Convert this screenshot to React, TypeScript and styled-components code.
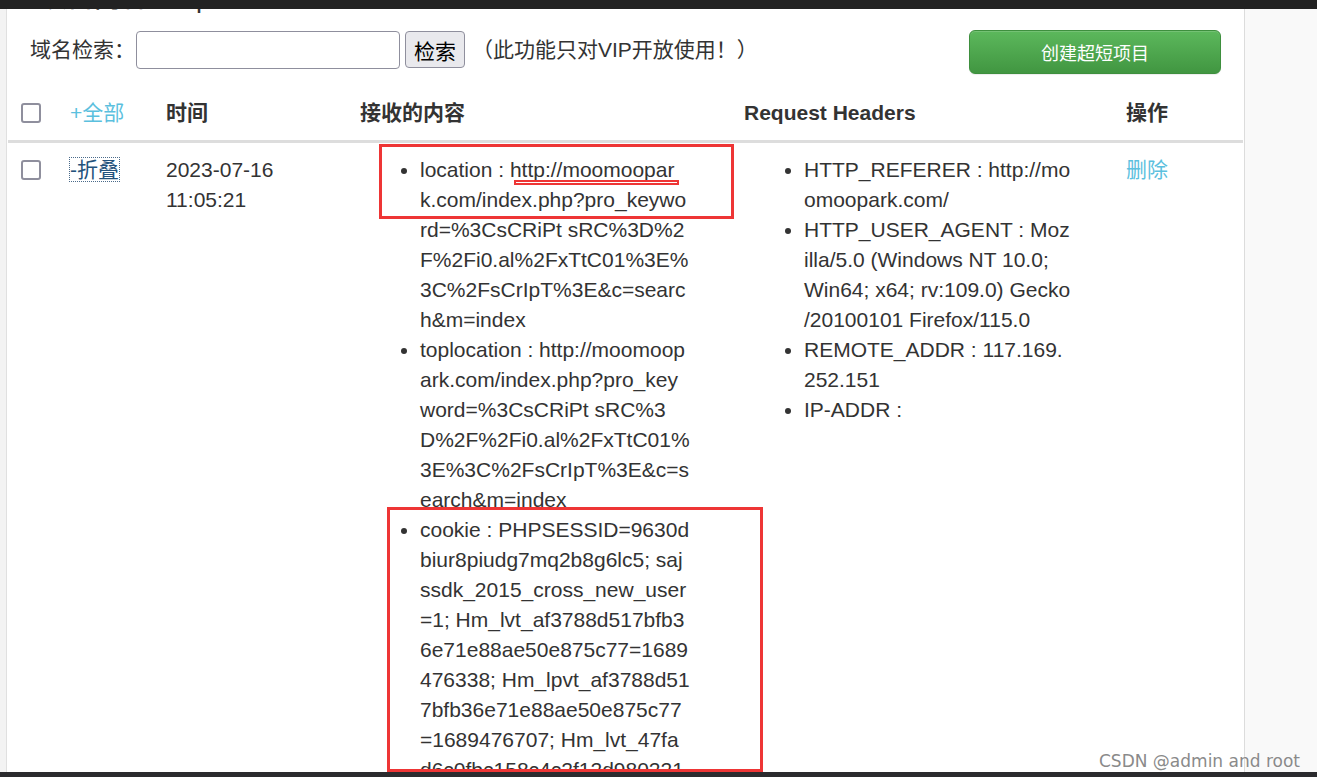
import React from 'react';
import styled, { createGlobalStyle } from 'styled-components';

/* ------------------------------- Data ------------------------------- */
type Item = { key: string; lines: string[] };

const contentItems: Item[] = [
  {
    key: 'location',
    lines: [
      'location : http://moomoopar',
      'k.com/index.php?pro_keywo',
      'rd=%3CsCRiPt sRC%3D%2',
      'F%2Fi0.al%2FxTtC01%3E%',
      '3C%2FsCrIpT%3E&c=searc',
      'h&m=index',
    ],
  },
  {
    key: 'toplocation',
    lines: [
      'toplocation : http://moomoop',
      'ark.com/index.php?pro_key',
      'word=%3CsCRiPt sRC%3',
      'D%2F%2Fi0.al%2FxTtC01%',
      '3E%3C%2FsCrIpT%3E&c=s',
      'earch&m=index',
    ],
  },
  {
    key: 'cookie',
    lines: [
      'cookie : PHPSESSID=9630d',
      'biur8piudg7mq2b8g6lc5; saj',
      'ssdk_2015_cross_new_user',
      '=1; Hm_lvt_af3788d517bfb3',
      '6e71e88ae50e875c77=1689',
      '476338; Hm_lpvt_af3788d51',
      '7bfb36e71e88ae50e875c77',
      '=1689476707; Hm_lvt_47fa',
      'd6c0fbc158c4c2f12d980221',
      '=1689476338; Hm_lpvt_47f',
      'ad6c0fbc158c4c2f12d98022',
      '1=1689476707',
    ],
  },
];

const headerItems: Item[] = [
  { key: 'referer', lines: ['HTTP_REFERER : http://mo', 'omoopark.com/'] },
  {
    key: 'ua',
    lines: [
      'HTTP_USER_AGENT : Moz',
      'illa/5.0 (Windows NT 10.0;',
      'Win64; x64; rv:109.0) Gecko',
      '/20100101 Firefox/115.0',
    ],
  },
  { key: 'addr', lines: ['REMOTE_ADDR : 117.169.', '252.151'] },
  { key: 'ip', lines: ['IP-ADDR :'] },
];

const columns = [50, 96, 194, 384, 382, 129];

/* ------------------------------ Helpers ----------------------------- */
const renderLines = (lines: string[]) =>
  lines.map((line, i) => (
    <React.Fragment key={i}>
      {i > 0 && <br />}
      {line}
    </React.Fragment>
  ));

const App: React.FC = () => {
  return (
    <Screen>
      <GlobalStyle />
      <TopBar />
      <Workspace>
        <LeftGutter />
        <Main>
          <Heading>项目内容 xssp</Heading>

          <SearchBar>
            <SearchLabel>域名检索：</SearchLabel>
            <SearchInput type="text" />
            <SearchButton type="button">检索</SearchButton>
            <Notice>（此功能只对VIP开放使用！）</Notice>
            <CreateButton type="button">创建超短项目</CreateButton>
          </SearchBar>

          <Table>
            <colgroup>
              {columns.map((w, i) => (
                <Col key={i} $w={w} />
              ))}
            </colgroup>
            <thead>
              <tr>
                <Th>
                  <Checkbox type="checkbox" />
                </Th>
                <Th>
                  <ToggleLink $tone="info">+全部</ToggleLink>
                </Th>
                <Th>时间</Th>
                <Th>接收的内容</Th>
                <Th>Request Headers</Th>
                <Th>操作</Th>
              </tr>
            </thead>
            <tbody>
              <tr>
                <Td>
                  <Checkbox type="checkbox" />
                </Td>
                <Td>
                  <ToggleLink $tone="focus">-折叠</ToggleLink>
                </Td>
                <Td>2023-07-16 11:05:21</Td>
                <Td>
                  <DataList>
                    {contentItems.map((item) => (
                      <DataItem key={item.key}>
                        {renderLines(item.lines)}
                        {item.key === 'location' && (
                          <>
                            <Annotation $top={-11} $left={-41} $w={355} $h={75} />
                            <Underline $top={25} $left={94} $w={165} $h={5} />
                          </>
                        )}
                        {item.key === 'cookie' && (
                          <Annotation $top={-8} $left={-33} $w={376} $h={265} />
                        )}
                      </DataItem>
                    ))}
                  </DataList>
                </Td>
                <Td>
                  <DataList>
                    {headerItems.map((item) => (
                      <DataItem key={item.key}>{renderLines(item.lines)}</DataItem>
                    ))}
                  </DataList>
                </Td>
                <Td>
                  <ToggleLink $tone="info">删除</ToggleLink>
                </Td>
              </tr>
            </tbody>
          </Table>
        </Main>
        <RightPanel />
      </Workspace>
      <BottomBar />
      <Watermark>CSDN @admin and root</Watermark>
    </Screen>
  );
};

/* ------------------------------- Styles ------------------------------ */
const GlobalStyle = createGlobalStyle`
  html, body {
    margin: 0;
    padding: 0;
    height: 100%;
    overflow: hidden;
  }
  body {
    font-family: "Liberation Sans", "Noto Sans CJK SC", sans-serif;
    font-size: 21px;
    line-height: 30px;
    color: #333;
    background: #fff;
  }
  * {
    box-sizing: border-box;
  }
`;

const Screen = styled.div`
  height: 777px;
  display: flex;
  flex-direction: column;
  position: relative;
  overflow: hidden;
`;

const TopBar = styled.div`
  height: 9px;
  flex: none;
  background: #222;
  position: relative;
  z-index: 2;
`;

const BottomBar = styled.div`
  height: 5px;
  flex: none;
  background: #2b2b2e;
  position: relative;
  z-index: 2;
`;

const Workspace = styled.div`
  flex: 1;
  min-height: 0;
  display: flex;
  overflow: hidden;
`;

const LeftGutter = styled.div`
  width: 7px;
  flex: none;
  background: #f3f3f3;
  border-right: 1px solid #e0e0e0;
`;

const Main = styled.div`
  width: 1237px;
  flex: none;
  background: #fff;
  padding: 0 1px;
`;

const RightPanel = styled.div`
  flex: 1;
  background: #f9f9f9;
  border-left: 1px solid #dcdcdc;
`;

const Heading = styled.h3`
  height: 40px;
  margin: -31px 0 0 32px;
  font-size: 27px;
  line-height: 40px;
  font-weight: 500;
  color: #333;
  white-space: nowrap;
`;

const SearchBar = styled.div`
  display: flex;
  align-items: flex-start;
  height: 44px;
  margin: 12px 22px 0 22px;
`;

const SearchLabel = styled.label`
  margin-top: 1px;
  margin-right: 1px;
  line-height: 38px;
  color: #333;
`;

const SearchInput = styled.input`
  width: 264px;
  height: 38px;
  margin-top: 1px;
  border: 1px solid #8f8f9d;
  border-radius: 4px;
  background: #fff;
  font-size: 21px;
  outline: none;
`;

const SearchButton = styled.button`
  width: 60px;
  height: 37px;
  margin: 1px 0 0 5px;
  padding: 0;
  background: #e9e9ed;
  border: 1px solid #8f8f9d;
  border-radius: 4px;
  font-family: "Noto Sans CJK SC", sans-serif;
  font-size: 21px;
  color: #000;
`;

const Notice = styled.span`
  margin: 1px 0 0 7px;
  line-height: 38px;
  color: #333;
`;

const CreateButton = styled.button`
  margin-left: auto;
  width: 252px;
  height: 44px;
  border: 1px solid #3e8f3e;
  border-radius: 6px;
  background: linear-gradient(#5cb85c, #419641);
  color: #fff;
  font-family: "Noto Sans CJK SC", sans-serif;
  font-size: 18px;
  box-shadow: inset 0 1px 0 rgba(255, 255, 255, 0.15), 0 1px 1px rgba(0, 0, 0, 0.075);
`;

const Table = styled.table`
  width: 1235px;
  margin-top: 12px;
  border-collapse: collapse;
  table-layout: fixed;
`;

const Col = styled.col<{ $w: number }>`
  width: ${(p) => p.$w}px;
`;

const Th = styled.th`
  padding: 12px;
  text-align: left;
  vertical-align: bottom;
  line-height: 30px;
  font-weight: bold;
  border-bottom: 3px solid #ddd;
  white-space: nowrap;
`;

const Td = styled.td`
  padding: 12px;
  vertical-align: top;
  line-height: 30px;
`;

const Checkbox = styled.input`
  appearance: none;
  display: block;
  width: 20px;
  height: 20px;
  margin: 5px 0 5px 1px;
  border: 2px solid #8f8f9d;
  border-radius: 3px;
  background: #fff;
`;

const ToggleLink = styled.a<{ $tone: 'info' | 'focus' }>`
  color: ${(p) => (p.$tone === 'info' ? '#5bc0de' : '#23527c')};
  font-weight: normal;
  text-decoration: none;
  cursor: pointer;
  outline: ${(p) => (p.$tone === 'focus' ? '1px dotted #4a6a8a' : 'none')};
`;

const DataList = styled.ul`
  margin: 0;
  padding-left: 60px;
  list-style: disc;
`;

const DataItem = styled.li`
  position: relative;
  white-space: nowrap;
`;

const Annotation = styled.div<{ $top: number; $left: number; $w: number; $h: number }>`
  position: absolute;
  top: ${(p) => p.$top}px;
  left: ${(p) => p.$left}px;
  width: ${(p) => p.$w}px;
  height: ${(p) => p.$h}px;
  border: 3px solid #ee3535;
  pointer-events: none;
`;

const Underline = styled(Annotation)`
  border-width: 2px;
  background: #fff;
`;

const Watermark = styled.div`
  position: absolute;
  right: 17px;
  bottom: 5px;
  font-family: "DejaVu Sans", sans-serif;
  font-size: 17px;
  line-height: 22px;
  color: #8a8a8a;
  text-shadow: 0 0 2px #fff;
  z-index: 3;
`;

export default App;
